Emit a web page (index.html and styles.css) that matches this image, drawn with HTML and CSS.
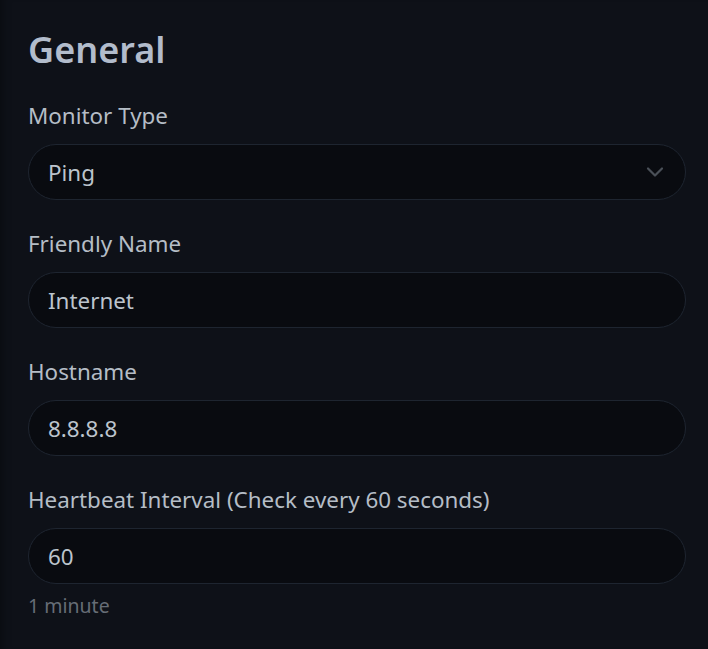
FILE: index.html
```html
<!DOCTYPE html>
<html lang="en">
<head>
<meta charset="utf-8">
<title>General</title>
<link rel="stylesheet" href="styles.css">
</head>
<body>
<div class="card">
  <h2 class="title">General</h2>

  <div class="field">
    <label class="label" for="type">Monitor Type</label>
    <div class="select-wrap">
      <div class="control select" id="type">Ping</div>
      <svg class="chevron" width="18" height="12" viewBox="0 0 18 12"><path d="M2 2.5 L9 9.5 L16 2.5" fill="none" stroke="#4a5058" stroke-width="2.2" stroke-linecap="round" stroke-linejoin="round"/></svg>
    </div>
  </div>

  <div class="field">
    <label class="label">Friendly Name</label>
    <div class="control">Internet</div>
  </div>

  <div class="field">
    <label class="label">Hostname</label>
    <div class="control">8.8.8.8</div>
  </div>

  <div class="field">
    <label class="label">Heartbeat Interval (Check every 60 seconds)</label>
    <div class="control">60</div>
    <div class="hint">1 minute</div>
  </div>
</div>
</body>
</html>
```

FILE: styles.css
```css
html, body {
  margin: 0;
  padding: 0;
  background: #0d1017;
}
body {
  font-family: "Noto Sans", "Open Sans", sans-serif;
  color: #b4bcc6;
  width: 708px;
  height: 649px;
  overflow: hidden;
}
.card {
  padding: 21px 22px 0 28px;
  box-shadow: inset 10px 0 10px -8px rgba(0,0,0,0.35);
  min-height: 649px;
  box-sizing: border-box;
  background: #0e1118;
}
.title {
  margin: 0;
  font-size: 36px;
  font-weight: 600;
  line-height: 58px;
  color: #b2bccb;
}
.field {
  margin-top: 19px;
}
.field + .field {
  margin-top: 26px;
}
.label {
  display: block;
  font-size: 22.4px;
  line-height: 36px;
  margin-bottom: 10px;
  color: #b5bdc6;
}
.control {
  box-sizing: border-box;
  height: 56px;
  border: 1px solid #1e2530;
  border-radius: 28px;
  background: #090b10;
  padding: 0 19px;
  display: flex;
  align-items: center;
  font-size: 22.4px;
  color: #bcc4cd;
}
.select-wrap {
  position: relative;
}
.chevron {
  position: absolute;
  right: 22px;
  top: 22px;
}
.hint {
  margin-top: 8px;
  font-size: 19.5px;
  line-height: 28px;
  color: #666d76;
}
```
